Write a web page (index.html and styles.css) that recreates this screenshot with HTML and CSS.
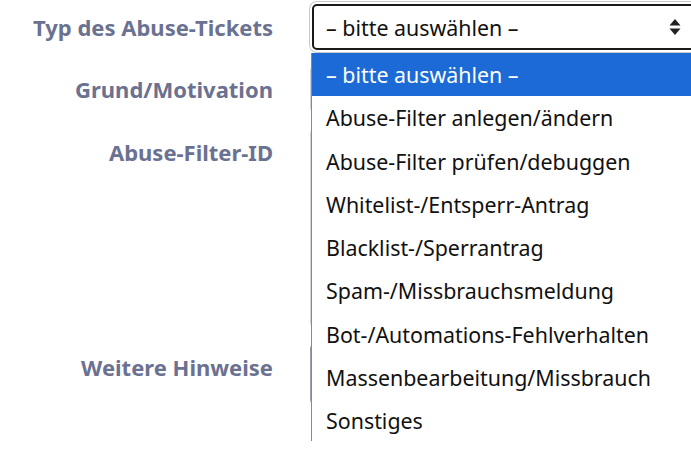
FILE: index.html
```html
<!DOCTYPE html>
<html lang="de">
<head>
<meta charset="utf-8">
<title>Abuse-Ticket</title>
<link rel="stylesheet" href="styles.css">
</head>
<body>
<form class="form">
  <div class="row row-1">
    <label class="label">Typ des Abuse-Tickets</label>
    <div class="field">
      <div class="select">
        <span class="select-value">– bitte auswählen –</span>
        <svg class="select-arrows" width="12" height="18" viewBox="0 0 12 18"><path d="M6 1 L11.5 7.5 H0.5 Z M6 17 L11.5 10.5 H0.5 Z" fill="#222"/></svg>
      </div>
    </div>
  </div>
  <div class="row row-2">
    <label class="label">Grund/Motivation</label>
    <div class="field"><div class="input input-grund"></div></div>
  </div>
  <div class="row row-3">
    <label class="label">Abuse-Filter-ID</label>
    <div class="field"><div class="input input-id"></div></div>
  </div>
  <div class="row row-4">
    <label class="label">Weitere Hinweise</label>
    <div class="field"><div class="input input-notes"></div></div>
  </div>
  <ul class="dropdown">
    <li class="option selected">– bitte auswählen –</li>
    <li class="option">Abuse-Filter anlegen/ändern</li>
    <li class="option">Abuse-Filter prüfen/debuggen</li>
    <li class="option">Whitelist-/Entsperr-Antrag</li>
    <li class="option">Blacklist-/Sperrantrag</li>
    <li class="option">Spam-/Missbrauchsmeldung</li>
    <li class="option">Bot-/Automations-Fehlverhalten</li>
    <li class="option">Massenbearbeitung/Missbrauch</li>
    <li class="option">Sonstiges</li>
  </ul>
</form>
</body>
</html>
```
FILE: styles.css
```css
html, body {
  margin: 0;
  padding: 0;
  background: #ffffff;
  overflow: hidden;
}
body {
  font-family: "Noto Sans", "Open Sans", sans-serif;
  width: 691px;
  height: 450px;
}
.form {
  position: relative;
  display: flex;
  flex-direction: column;
  padding-top: 4px;
}
.row {
  display: flex;
  align-items: flex-start;
  gap: 37px;
}
.row-2 { margin-top: 16px; }
.row-3 { margin-top: 17px; }
.row-4 { margin-top: 17px; }
.label {
  width: 273px;
  text-align: right;
  font-weight: 700;
  font-size: 22px;
  line-height: 46px;
  color: #6b7190;
  white-space: nowrap;
}
.field {
  flex: 1;
  margin-right: -10px;
}
.select {
  height: 46px;
  box-sizing: border-box;
  margin-left: 2px;
  border: 2px solid #1a1a1a;
  border-radius: 5px;
  box-shadow: 0 0 0 2px #fff, 0 0 0 3px #c9c9c9;
  display: flex;
  align-items: center;
  padding-left: 12px;
  padding-right: 18px;
  font-size: 21.4px;
  color: #111;
}
.select-value { flex: 1; }
.select-arrows { display: block; }
.input {
  box-sizing: border-box;
  border: 1px solid #cfd2da;
  border-radius: 4px;
  height: 46px;
}
.input-id { height: 198px; }
.input-notes { height: 60px; border-color: #9a9ea8; }
.dropdown {
  position: absolute;
  top: 53px;
  left: 311px;
  width: 400px;
  margin: 0;
  padding: 0;
  list-style: none;
  background: #fff;
  border-left: 1px solid #8a8a8a;
  height: 388px;
}
.option {
  height: 43.25px;
  line-height: 43.25px;
  padding-left: 14px;
  font-size: 21.4px;
  color: #111;
  white-space: nowrap;
}
.option.selected {
  background: #1b6ad6;
  color: #fff;
}
```
